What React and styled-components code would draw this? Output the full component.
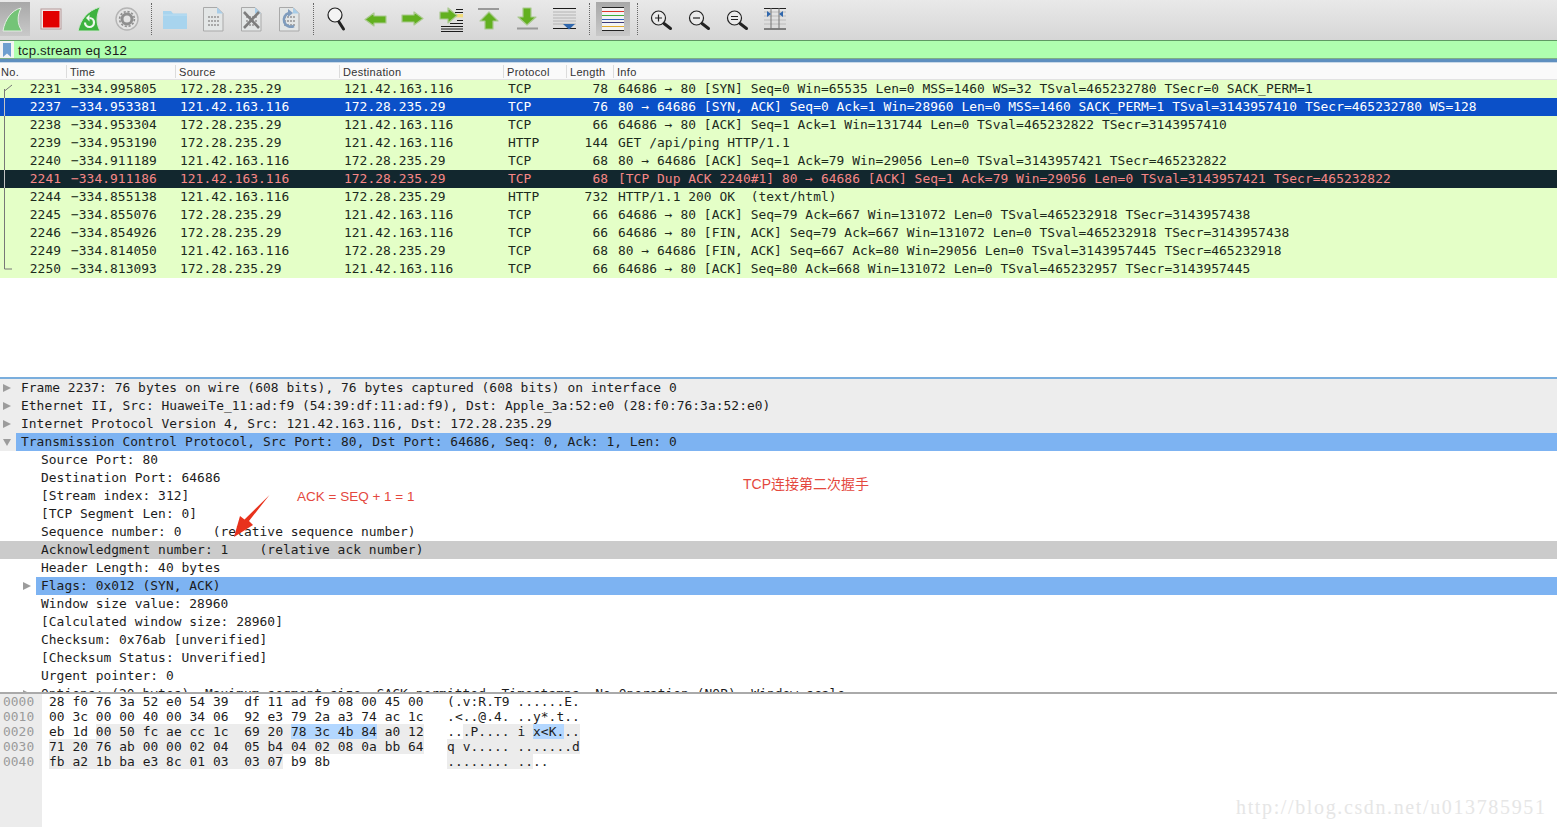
import React from 'react'
import styled, { createGlobalStyle } from 'styled-components'

const mono = `'DejaVu Sans Mono', 'Liberation Mono', monospace`
const sans = `'Liberation Sans', Arial, sans-serif`

const GlobalStyle = createGlobalStyle`
  html, body {
    margin: 0;
    padding: 0;
    background: #fff;
  }
`

const Page = styled.div`
  position: relative;
  width: 1557px;
  height: 827px;
  overflow: hidden;
  display: flex;
  flex-direction: column;
  background: #fff;
  color: #1c1c1c;
  font-family: ${mono};
  font-size: 12.9px;
  letter-spacing: 0.045px;
`

const Toolbar = styled.div`
  display: flex;
  align-items: center;
  height: 41px;
  flex: none;
  box-sizing: border-box;
  padding-bottom: 3px;
  background: linear-gradient(#e9e9e9, #d6d6d6);
  border-bottom: 1px solid #5f9a63;
`

const ToolButton = styled.div`
  display: flex;
  align-items: center;
  justify-content: center;
  height: 34px;
  width: ${(p) => p.$width || 38}px;
  margin: 0 ${(p) => p.$right || 0}px 0 ${(p) => p.$left || 0}px;
  background: ${(p) => (p.$active ? 'linear-gradient(#a8a8a8, #c9c9c9)' : 'none')};
`

const ToolSep = styled.div`
  width: 10px;
  height: 32px;
  display: flex;
  justify-content: center;
  &::after {
    content: '';
    border-left: 1px dotted #666;
  }
`

const FilterBar = styled.div`
  display: flex;
  height: 18px;
  flex: none;
  background: #afffaf;
  border-bottom: 1px solid #7fae85;
  box-sizing: border-box;
`

const BookmarkSlot = styled.div`
  width: 14px;
  background: #f4f4f4;
  display: flex;
  justify-content: center;
  padding-top: 2px;
  box-sizing: border-box;
`

const FilterText = styled.div`
  font-family: ${sans};
  font-size: 13.2px;
  line-height: 19px;
  padding-left: 4px;
  letter-spacing: 0.2px;
`

const Band = styled.div`
  height: 4px;
  flex: none;
  background: linear-gradient(#5f8fbf 0 75%, #c9d9e8 75%);
`

const PacketList = styled.div`
  height: 314px;
  flex: none;
  overflow: hidden;
`

const ColumnGrid = styled.div`
  display: grid;
  grid-template-columns: 66px 109px 164px 164px 63px 47px 1fr;
`

const HeaderRow = styled(ColumnGrid)`
  height: 17px;
  background: #fafafa;
  border-bottom: 1px solid #e2e2e2;
  box-sizing: border-box;
`

const HeaderCell = styled.div`
  font-family: ${sans};
  font-size: 11px;
  line-height: 19px;
  letter-spacing: 0.3px;
  padding-left: ${(p) => (p.$first ? 1 : 4)}px;
  color: #333;
  position: relative;
  &::before {
    content: '';
    display: ${(p) => (p.$first ? 'none' : 'block')};
    position: absolute;
    left: 0;
    top: 2px;
    height: 13px;
    border-left: 1px solid #dcdcdc;
  }
`

const PacketRow = styled(ColumnGrid)`
  height: 18px;
  line-height: 18px;
  white-space: pre;
  background: ${(p) => (p.$kind === 'sel' ? '#0b50c8' : p.$kind === 'dup' ? '#12272e' : '#e4ffc7')};
  color: ${(p) => (p.$kind === 'sel' ? '#fff' : p.$kind === 'dup' ? '#f78787' : '#1c2a1c')};
`

const Cell = styled.div`
  position: relative;
  padding: ${(p) => (p.$right ? '0 5px 0 0' : '0 0 0 5px')};
  text-align: ${(p) => (p.$right ? 'right' : 'left')};
`

const ThreadMark = styled.svg`
  position: absolute;
  left: 0;
  top: 0;
`

const DetailPane = styled.div`
  height: 315px;
  flex: none;
  box-sizing: border-box;
  border-top: 2px solid #7aaedd;
  overflow: hidden;
`

const TreeRow = styled.div`
  display: flex;
  height: 18px;
  line-height: 18px;
  white-space: pre;
  padding-left: ${(p) => p.$level * 20}px;
  background: ${(p) => (p.$tone === 'group' ? '#ededed' : p.$tone === 'mark' ? '#cbcbcb' : 'transparent')};
`

const Twisty = styled.div`
  width: 16px;
  flex: none;
  display: flex;
  align-items: center;
  padding-left: 3px;
  box-sizing: border-box;
`

const TreeLabel = styled.div`
  flex: 1;
  padding-left: 5px;
  background: ${(p) => (p.$selected ? '#7db3f2' : 'none')};
`

const HexPane = styled.div`
  flex: 1;
  display: flex;
  border-top: 2px solid #aaa;
  min-height: 0;
`

const Gutter = styled.div`
  width: 42px;
  flex: none;
  background: #ececec;
  color: #9a9a9a;
  padding-left: 3px;
  box-sizing: border-box;
`

const HexBody = styled.div`
  padding-left: 7px;
`

const HexLine = styled.div`
  height: 15px;
  line-height: 15px;
  white-space: pre;
`

const Bytes = styled.span`
  background: ${(p) => (p.$tone === 'field' ? '#b3d7ff' : p.$tone === 'proto' ? '#ececec' : 'none')};
`

const Note = styled.div`
  position: absolute;
  left: ${(p) => p.$x}px;
  top: ${(p) => p.$y}px;
  font-family: ${sans}, 'Noto Sans CJK SC', sans-serif;
  font-size: ${(p) => p.$size}px;
  line-height: 16px;
  letter-spacing: 0;
  color: #e4483e;
`

const NoteArrow = styled.svg`
  position: absolute;
  left: 230px;
  top: 492px;
`

const Watermark = styled.div`
  position: absolute;
  left: 1236px;
  top: 795px;
  font-family: 'Liberation Serif', serif;
  font-size: 20px;
  line-height: 24px;
  letter-spacing: 1.63px;
  color: #e6e6e6;
`

const Icon = ({ children, size = 30 }) => (
  <svg width={size} height={size} viewBox='0 0 30 30'>
    {children}
  </svg>
)

const StartIcon = () => (
  <Icon>
    <path d='M3 27 C5 15 12 6 21 4 C17 12 17 20 22 27 Z' fill='#74c477' stroke='#e3eee3' strokeWidth='1' />
  </Icon>
)

const StopIcon = () => (
  <Icon>
    <rect x='5' y='5' width='20' height='20' fill='#f2e9e9' stroke='#b59a9a' />
    <rect x='7' y='7' width='16.5' height='16.5' fill='#e10000' />
  </Icon>
)

const RestartIcon = () => (
  <Icon>
    <path d='M4 27 C7 15 13 7 26 3 C22 12 22 20 26 27 Z' fill='#3db33f' stroke='#cfe6cf' strokeWidth='1' />
    <path d='M11 18.5 A4.5 4.5 0 1 0 15.5 14' fill='none' stroke='#eef8ee' strokeWidth='2.2' />
    <path d='M15.5 10.5 L12 14 L15.5 17.5 Z' fill='#eef8ee' />
  </Icon>
)

const GearIcon = () => (
  <Icon>
    <circle cx='15' cy='15' r='11' fill='#e4e4e4' stroke='#b4b4b4' strokeWidth='1.4' />
    <circle cx='15' cy='15' r='5' fill='none' stroke='#8f8f8f' strokeWidth='3' />
    <circle cx='15' cy='15' r='7.4' fill='none' stroke='#8f8f8f' strokeWidth='1.6' strokeDasharray='2.2 1.7' />
  </Icon>
)

const FolderIcon = () => (
  <Icon>
    <path d='M3 7 H11 L13 9.5 H27 V25 H3 Z' fill='#a8d4ee' />
    <path d='M3 11 H27' stroke='#bddff3' strokeWidth='1' />
  </Icon>
)

const SheetBase = ({ dots = '#a8a8a8' }) => (
  <>
    <path d='M5.5 3.5 H19 L25 9.5 V27 H5.5 Z' fill='#e3e6e6' stroke='#a9a9a9' />
    <path d='M19 3.5 L25 9.5 H19 Z' fill='#a8cde8' />
    <path d='M10 13 H21 M10 17 H21 M10 21 H21' stroke={dots} strokeWidth='2' strokeDasharray='2 1' />
  </>
)

const SheetIcon = () => (
  <Icon>
    <SheetBase />
  </Icon>
)

const CloseSheetIcon = () => (
  <Icon>
    <SheetBase />
    <path d='M8 8 L23 24 M23 8 L8 24' stroke='#7d7d7d' strokeWidth='2.6' />
  </Icon>
)

const ReloadSheetIcon = () => (
  <Icon>
    <SheetBase />
    <path d='M20 22 A7 7 0 1 1 15 9' fill='none' stroke='#7f9cbd' strokeWidth='2.6' />
    <path d='M14 5 L19 9 L14 13 Z' fill='#7f9cbd' />
  </Icon>
)

const Lens = ({ mark }) => (
  <>
    <circle cx='12.5' cy='14' r='7' fill='#f2f2f2' fillOpacity='0.6' stroke='#222' strokeWidth='1.2' />
    <path d='M18 19.5 L24.5 24.5' stroke='#222' strokeWidth='3' strokeLinecap='round' />
    {mark}
  </>
)

const FindIcon = () => (
  <Icon>
    <circle cx='13' cy='11' r='7' fill='#f4f4f4' stroke='#222' strokeWidth='1.2' />
    <path d='M17 18 L21.5 25' stroke='#222' strokeWidth='3' strokeLinecap='round' />
  </Icon>
)

const ZoomInIcon = () => (
  <Icon>
    <Lens mark={<path d='M9 14 H16 M12.5 10.5 V17.5' stroke='#222' strokeWidth='1.2' />} />
  </Icon>
)

const ZoomOutIcon = () => (
  <Icon>
    <Lens mark={<path d='M9 14 H16' stroke='#222' strokeWidth='1.2' />} />
  </Icon>
)

const ZoomResetIcon = () => (
  <Icon>
    <Lens mark={<path d='M9 12.5 H16 M9 15.5 H16' stroke='#222' strokeWidth='1.2' />} />
  </Icon>
)

const GreenArrow = ({ d }) => (
  <path d={d} fill='#62b01f' stroke='#aac98f' strokeWidth='1.2' strokeLinejoin='round' />
)

const BackIcon = () => (
  <Icon>
    <GreenArrow d='M5 15.5 L14 9 V12 H26 V19 H14 V22 Z' />
  </Icon>
)

const ForwardIcon = () => (
  <Icon>
    <GreenArrow d='M25 14.5 L16 8 V11 H4 V18 H16 V21 Z' />
  </Icon>
)

const JumpIcon = () => (
  <Icon>
    <path d='M20 5.5 H27 M19 8.5 H27 M21 16.5 H27 M14 19.5 H27 M5 22.5 H27 M5 25 H27 M5 27.5 H27' stroke='#1c1c1c' strokeWidth='1' />
    <rect x='20' y='10' width='7' height='3.4' fill='#f2dd7a' />
    <GreenArrow d='M21 11.5 L12 4 V8 H4 V15 H12 V19 Z' />
  </Icon>
)

const FirstIcon = () => (
  <Icon>
    <path d='M4 5 H25' stroke='#999' strokeWidth='2' />
    <GreenArrow d='M15 8 L24 17 H19 V25 H11 V17 H6 Z' />
  </Icon>
)

const LastIcon = () => (
  <Icon>
    <path d='M5 24.5 H26' stroke='#999' strokeWidth='2' />
    <GreenArrow d='M15 21 L6 13 H11 V4 H19 V13 H24 Z' />
  </Icon>
)

const AutoScrollIcon = () => (
  <Icon>
    <path d='M3 4.5 H26 M3 24.5 H26' stroke='#1c1c1c' strokeWidth='1.2' />
    <path d='M3 8 H26 M3 11 H26 M3 14 H26 M3 17 H26 M3 20 H26' stroke='#b4b4b4' strokeWidth='1' />
    <path d='M13 20 H25 L19 25.5 Z' fill='#2f67ad' />
  </Icon>
)

const ColorizeIcon = () => (
  <Icon>
    <rect x='4' y='3' width='22' height='24' fill='#f3f3f3' />
    <path d='M4 3.5 H26' stroke='#222' />
    <path d='M4 7.5 H26' stroke='#e0352b' />
    <path d='M4 11.5 H26' stroke='#3fae3a' />
    <path d='M4 15.5 H26' stroke='#2f5fc0' />
    <path d='M4 18.5 H26' stroke='#3a3a7a' />
    <path d='M4 22.5 H26' stroke='#e0a92a' />
    <path d='M4 26.5 H26' stroke='#222' />
  </Icon>
)

const ResizeIcon = () => (
  <Icon>
    <path d='M4 4.5 H26 M4 25 H26' stroke='#222' strokeWidth='1.2' />
    <path d='M4 8 H26 M4 12 H26 M4 16 H26 M4 20 H26' stroke='#bcbcbc' />
    <path d='M11 4 V25 M19 4 V25' stroke='#777' />
    <path d='M7 7 L11 10 L7 13 Z M23 7 L19 10 L23 13 Z' fill='#2f67ad' />
  </Icon>
)

const BookmarkIcon = () => (
  <svg width='8' height='14' viewBox='0 0 8 14'>
    <path d='M0 0 H8 V14 L4 10.5 L0 14 Z' fill='#6f9fd0' />
  </svg>
)

const TwistyIcon = ({ open }) => (
  <svg width='8' height='8' viewBox='0 0 8 8'>
    <path d={open ? 'M0 1 H8 L4 8 Z' : 'M0 0 L8 4 L0 8 Z'} fill='#9c9c9c' />
  </svg>
)

const threadPaths = {
  first: 'M4.5 18 V9 M4.5 11 L12 5',
  mid: 'M4.5 0 V18',
  last: 'M4.5 0 V9 H12',
}

const packets = [
  ['2231', '−334.995805', '172.28.235.29', '121.42.163.116', 'TCP', '78', '64686 → 80 [SYN] Seq=0 Win=65535 Len=0 MSS=1460 WS=32 TSval=465232780 TSecr=0 SACK_PERM=1', 'first'],
  ['2237', '−334.953381', '121.42.163.116', '172.28.235.29', 'TCP', '76', '80 → 64686 [SYN, ACK] Seq=0 Ack=1 Win=28960 Len=0 MSS=1460 SACK_PERM=1 TSval=3143957410 TSecr=465232780 WS=128', 'mid', 'sel'],
  ['2238', '−334.953304', '172.28.235.29', '121.42.163.116', 'TCP', '66', '64686 → 80 [ACK] Seq=1 Ack=1 Win=131744 Len=0 TSval=465232822 TSecr=3143957410', 'mid'],
  ['2239', '−334.953190', '172.28.235.29', '121.42.163.116', 'HTTP', '144', 'GET /api/ping HTTP/1.1', 'mid'],
  ['2240', '−334.911189', '121.42.163.116', '172.28.235.29', 'TCP', '68', '80 → 64686 [ACK] Seq=1 Ack=79 Win=29056 Len=0 TSval=3143957421 TSecr=465232822', 'mid'],
  ['2241', '−334.911186', '121.42.163.116', '172.28.235.29', 'TCP', '68', '[TCP Dup ACK 2240#1] 80 → 64686 [ACK] Seq=1 Ack=79 Win=29056 Len=0 TSval=3143957421 TSecr=465232822', 'mid', 'dup'],
  ['2244', '−334.855138', '121.42.163.116', '172.28.235.29', 'HTTP', '732', 'HTTP/1.1 200 OK  (text/html)', 'mid'],
  ['2245', '−334.855076', '172.28.235.29', '121.42.163.116', 'TCP', '66', '64686 → 80 [ACK] Seq=79 Ack=667 Win=131072 Len=0 TSval=465232918 TSecr=3143957438', 'mid'],
  ['2246', '−334.854926', '172.28.235.29', '121.42.163.116', 'TCP', '66', '64686 → 80 [FIN, ACK] Seq=79 Ack=667 Win=131072 Len=0 TSval=465232918 TSecr=3143957438', 'mid'],
  ['2249', '−334.814050', '121.42.163.116', '172.28.235.29', 'TCP', '68', '80 → 64686 [FIN, ACK] Seq=667 Ack=80 Win=29056 Len=0 TSval=3143957445 TSecr=465232918', 'mid'],
  ['2250', '−334.813093', '172.28.235.29', '121.42.163.116', 'TCP', '66', '64686 → 80 [ACK] Seq=80 Ack=668 Win=131072 Len=0 TSval=465232957 TSecr=3143957445', 'last'],
]

const tree = [
  { text: 'Frame 2237: 76 bytes on wire (608 bits), 76 bytes captured (608 bits) on interface 0', level: 0, twisty: 'closed', tone: 'group' },
  { text: 'Ethernet II, Src: HuaweiTe_11:ad:f9 (54:39:df:11:ad:f9), Dst: Apple_3a:52:e0 (28:f0:76:3a:52:e0)', level: 0, twisty: 'closed', tone: 'group' },
  { text: 'Internet Protocol Version 4, Src: 121.42.163.116, Dst: 172.28.235.29', level: 0, twisty: 'closed', tone: 'group' },
  { text: 'Transmission Control Protocol, Src Port: 80, Dst Port: 64686, Seq: 0, Ack: 1, Len: 0', level: 0, twisty: 'open', tone: 'group', selected: true },
  { text: 'Source Port: 80', level: 1 },
  { text: 'Destination Port: 64686', level: 1 },
  { text: '[Stream index: 312]', level: 1 },
  { text: '[TCP Segment Len: 0]', level: 1 },
  { text: 'Sequence number: 0    (relative sequence number)', level: 1 },
  { text: 'Acknowledgment number: 1    (relative ack number)', level: 1, tone: 'mark' },
  { text: 'Header Length: 40 bytes', level: 1 },
  { text: 'Flags: 0x012 (SYN, ACK)', level: 1, twisty: 'closed', selected: true },
  { text: 'Window size value: 28960', level: 1 },
  { text: '[Calculated window size: 28960]', level: 1 },
  { text: 'Checksum: 0x76ab [unverified]', level: 1 },
  { text: '[Checksum Status: Unverified]', level: 1 },
  { text: 'Urgent pointer: 0', level: 1 },
  { text: 'Options: (20 bytes), Maximum segment size, SACK permitted, Timestamps, No-Operation (NOP), Window scale', level: 1, twisty: 'closed' },
]

const hexOffsets = ['0000', '0010', '0020', '0030', '0040']

const hexLines = [
  [['28 f0 76 3a 52 e0 54 39  df 11 ad f9 08 00 45 00   (.v:R.T9 ......E.']],
  [['00 3c 00 00 40 00 34 06  92 e3 79 2a a3 74 ac 1c   .<..@.4. ..y*.t..']],
  [
    ['eb 1d '],
    ['00 50 fc ae cc 1c  69 20 ', 'proto'],
    ['78 3c 4b 84', 'field'],
    [' a0 12', 'proto'],
    ['   ..'],
    ['.P.... i ', 'proto'],
    ['x<K.', 'field'],
    ['..', 'proto'],
  ],
  [
    ['71 20 76 ab 00 00 02 04  05 b4 04 02 08 0a bb 64', 'proto'],
    ['   '],
    ['q v..... .......d', 'proto'],
  ],
  [
    ['fb a2 1b ba e3 8c 01 03  03 07', 'proto'],
    [' b9 8b               '],
    ['........ ..', 'proto'],
    ['..'],
  ],
]

const tools = [
  { icon: StartIcon, width: 30, right: 2, active: true },
  { icon: StopIcon },
  { icon: RestartIcon },
  { icon: GearIcon },
  'sep',
  { icon: FolderIcon },
  { icon: SheetIcon },
  { icon: CloseSheetIcon },
  { icon: ReloadSheetIcon },
  'sep',
  { icon: FindIcon },
  { icon: BackIcon },
  { icon: ForwardIcon },
  { icon: JumpIcon },
  { icon: FirstIcon },
  { icon: LastIcon },
  { icon: AutoScrollIcon },
  'sep',
  { icon: ColorizeIcon, width: 34, left: 2, right: 2, active: true },
  'sep',
  { icon: ZoomInIcon },
  { icon: ZoomOutIcon },
  { icon: ZoomResetIcon },
  { icon: ResizeIcon },
]

const columns = ['No.', 'Time', 'Source', 'Destination', 'Protocol', 'Length', 'Info']

const threadColor = (kind) => (kind === 'sel' || kind === 'dup' ? '#c4c4c4' : '#777')

export default () => (
  <Page>
    <GlobalStyle />
    <Toolbar>
      {tools.map((tool, i) =>
        tool === 'sep' ? (
          <ToolSep key={i} />
        ) : (
          <ToolButton key={i} $width={tool.width} $left={tool.left} $right={tool.right} $active={tool.active}>
            <tool.icon />
          </ToolButton>
        ),
      )}
    </Toolbar>
    <FilterBar>
      <BookmarkSlot>
        <BookmarkIcon />
      </BookmarkSlot>
      <FilterText>tcp.stream eq 312</FilterText>
    </FilterBar>
    <Band />
    <PacketList>
      <HeaderRow>
        {columns.map((name, i) => (
          <HeaderCell key={name} $first={i === 0}>
            {name}
          </HeaderCell>
        ))}
      </HeaderRow>
      {packets.map(([no, time, src, dst, proto, len, info, thread, kind]) => (
        <PacketRow key={no} $kind={kind}>
          <Cell $right>
            <ThreadMark width='14' height='18'>
              <path d={threadPaths[thread]} fill='none' stroke={threadColor(kind)} />
            </ThreadMark>
            {no}
          </Cell>
          <Cell>{time}</Cell>
          <Cell>{src}</Cell>
          <Cell>{dst}</Cell>
          <Cell>{proto}</Cell>
          <Cell $right>{len}</Cell>
          <Cell>{info}</Cell>
        </PacketRow>
      ))}
    </PacketList>
    <DetailPane>
      {tree.map((row) => (
        <TreeRow key={row.text} $level={row.level} $tone={row.tone}>
          <Twisty>{row.twisty && <TwistyIcon open={row.twisty === 'open'} />}</Twisty>
          <TreeLabel $selected={row.selected}>{row.text}</TreeLabel>
        </TreeRow>
      ))}
    </DetailPane>
    <HexPane>
      <Gutter>
        {hexOffsets.map((offset) => (
          <HexLine key={offset}>{offset}</HexLine>
        ))}
      </Gutter>
      <HexBody>
        {hexLines.map((parts, i) => (
          <HexLine key={i}>
            {parts.map(([text, tone], j) => (
              <Bytes key={j} $tone={tone}>
                {text}
              </Bytes>
            ))}
          </HexLine>
        ))}
      </HexBody>
    </HexPane>
    <Note $x={297} $y={489} $size={13.5}>
      ACK = SEQ + 1 = 1
    </Note>
    <Note $x={743} $y={476} $size={14}>
      TCP连接第二次握手
    </Note>
    <NoteArrow width='44' height='50'>
      <path d='M39.5 3 L19 29 L23 33 L4 45 L10 24 L14.5 27.5 Z' fill='#e8321c' />
    </NoteArrow>
    <Watermark>http://blog.csdn.net/u013785951</Watermark>
  </Page>
)
